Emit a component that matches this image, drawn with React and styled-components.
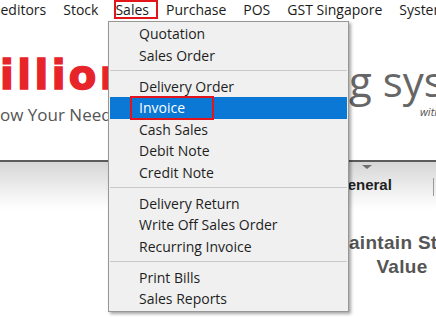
import React from 'react';
import styled, { createGlobalStyle } from 'styled-components';

const menuBarItems = ['editors', 'Stock', 'Sales', 'Purchase', 'POS', 'GST Singapore', 'System'];

const salesMenu = [
  ['Quotation', 'Sales Order'],
  ['Delivery Order', 'Invoice', 'Cash Sales', 'Debit Note', 'Credit Note'],
  ['Delivery Return', 'Write Off Sales Order', 'Recurring Invoice'],
  ['Print Bills', 'Sales Reports'],
];

function App() {
  return (
    <>
      <GlobalStyle />
      <Page>
        <MenuBar>
          {menuBarItems.map((label) => (
            <BarItem key={label} $marked={label === 'Sales'}>
              {label}
            </BarItem>
          ))}
        </MenuBar>

        <Header>
          <Brand>
            <Logo>illion</Logo>
            <Slogan>ow Your Needs</Slogan>
          </Brand>
          <Product>
            <ProductName>g system</ProductName>
            <ProductTag>with you</ProductTag>
          </Product>
        </Header>

        <TabStrip>
          <Tab>
            <TabMarker />
            <TabLabel>General</TabLabel>
          </Tab>
          <TabDivider />
        </TabStrip>

        <Content>
          <Caption>
            Maintain Stock
            <br />
            Value
          </Caption>
        </Content>

        <Dropdown>
          {salesMenu.map((group, gi) => (
            <React.Fragment key={gi}>
              {gi > 0 && <Separator />}
              {group.map((label) => (
                <MenuItem
                  key={label}
                  $active={label === 'Invoice'}
                  $marked={label === 'Invoice'}
                >
                  {label}
                </MenuItem>
              ))}
            </React.Fragment>
          ))}
        </Dropdown>
      </Page>
    </>
  );
}

export default App;

const GlobalStyle = createGlobalStyle`
  html, body {
    margin: 0;
    padding: 0;
    background: #ffffff;
    overflow: hidden;
  }
  body {
    font-family: "Open Sans", "Noto Sans", sans-serif;
  }
`;

const Page = styled.div`
  position: relative;
  width: 436px;
  height: 317px;
  overflow: hidden;
  background: #ffffff;
`;

const MenuBar = styled.div`
  display: flex;
  height: 21px;
  margin-left: -8px;
  white-space: nowrap;
  font-size: 14px;
  line-height: 19px;
  color: #1b1b1b;
`;

const BarItem = styled.div`
  position: relative;
  padding: 0 8.5px;

  ${({ $marked }) =>
    $marked &&
    `
    &::after {
      content: '';
      position: absolute;
      left: 7px;
      right: -1px;
      top: 0;
      height: 19px;
      border: 2px solid #e3151a;
      box-sizing: border-box;
    }
  `}
`;

const Header = styled.div`
  display: grid;
  grid-template-columns: 349px 1fr;
  height: 139px;
  border-bottom: 2px solid #5b5b5b;
  overflow: hidden;
`;

const Brand = styled.div`
  display: flex;
  flex-direction: column;
  padding-top: 34px;
`;

const Logo = styled.div`
  font-family: "DejaVu Sans", sans-serif;
  font-weight: bold;
  font-size: 40px;
  line-height: 40px;
  letter-spacing: 3.5px;
  color: #e8242b;
  -webkit-text-stroke: 1.5px #e8242b;
  white-space: nowrap;
`;

const Slogan = styled.div`
  margin-top: 10px;
  font-size: 17px;
  line-height: 20px;
  color: #555555;
  white-space: nowrap;
`;

const Product = styled.div`
  display: flex;
  flex-direction: column;
  padding-top: 39px;
  white-space: nowrap;
`;

const ProductName = styled.div`
  font-size: 42px;
  line-height: 42px;
  color: #666666;
`;

const ProductTag = styled.div`
  margin-top: 3px;
  padding-left: 71px;
  font-size: 11px;
  font-style: italic;
  line-height: 14px;
  color: #555555;
`;

const TabStrip = styled.div`
  display: flex;
  align-items: flex-start;
  gap: 41px;
  height: 48px;
  padding-left: 336px;
  background: linear-gradient(#d6d6d6, #f4f4f4 70%, #ffffff);
`;

const Tab = styled.div`
  display: flex;
  flex-direction: column;
  align-items: center;
`;

const TabMarker = styled.div`
  width: 0;
  height: 0;
  margin-top: 3px;
  margin-left: 6px;
  border-left: 5px solid transparent;
  border-right: 5px solid transparent;
  border-top: 4px solid #6d6d6d;
`;

const TabLabel = styled.div`
  margin-top: 6px;
  font-family: "Liberation Sans", Arial, sans-serif;
  font-weight: bold;
  font-size: 15px;
  line-height: 20px;
  color: #222222;
`;

const TabDivider = styled.div`
  width: 1px;
  height: 18px;
  margin-top: 16px;
  background: #9a9a9a;
`;

const Content = styled.div`
  padding-top: 21px;
`;

const Caption = styled.div`
  width: 140px;
  margin-left: 332px;
  text-align: center;
  white-space: nowrap;
  font-family: "Liberation Sans", Arial, sans-serif;
  font-weight: bold;
  font-size: 19px;
  line-height: 24px;
  letter-spacing: 0.3px;
  color: #555555;
`;

const Dropdown = styled.div`
  position: absolute;
  left: 108px;
  top: 21px;
  width: 241px;
  box-sizing: border-box;
  padding: 1px;
  border: 1px solid #979797;
  background: #f0f0f0;
  box-shadow: 2px 2px 3px rgba(0, 0, 0, 0.35);
`;

const MenuItem = styled.div`
  position: relative;
  height: 21.5px;
  padding-left: 29px;
  font-size: 14px;
  line-height: 21.5px;
  white-space: nowrap;
  color: ${({ $active }) => ($active ? '#ffffff' : '#1e1e1e')};
  background: ${({ $active }) => ($active ? '#0b78d6' : 'transparent')};

  ${({ $marked }) =>
    $marked &&
    `
    &::after {
      content: '';
      position: absolute;
      left: 20px;
      width: 84px;
      top: -1px;
      bottom: -1px;
      border: 2px solid #e3151a;
      box-sizing: border-box;
    }
  `}
`;

const Separator = styled.div`
  height: 1px;
  margin: 4px 0 4.5px;
  background: #c9c9c9;
`;
